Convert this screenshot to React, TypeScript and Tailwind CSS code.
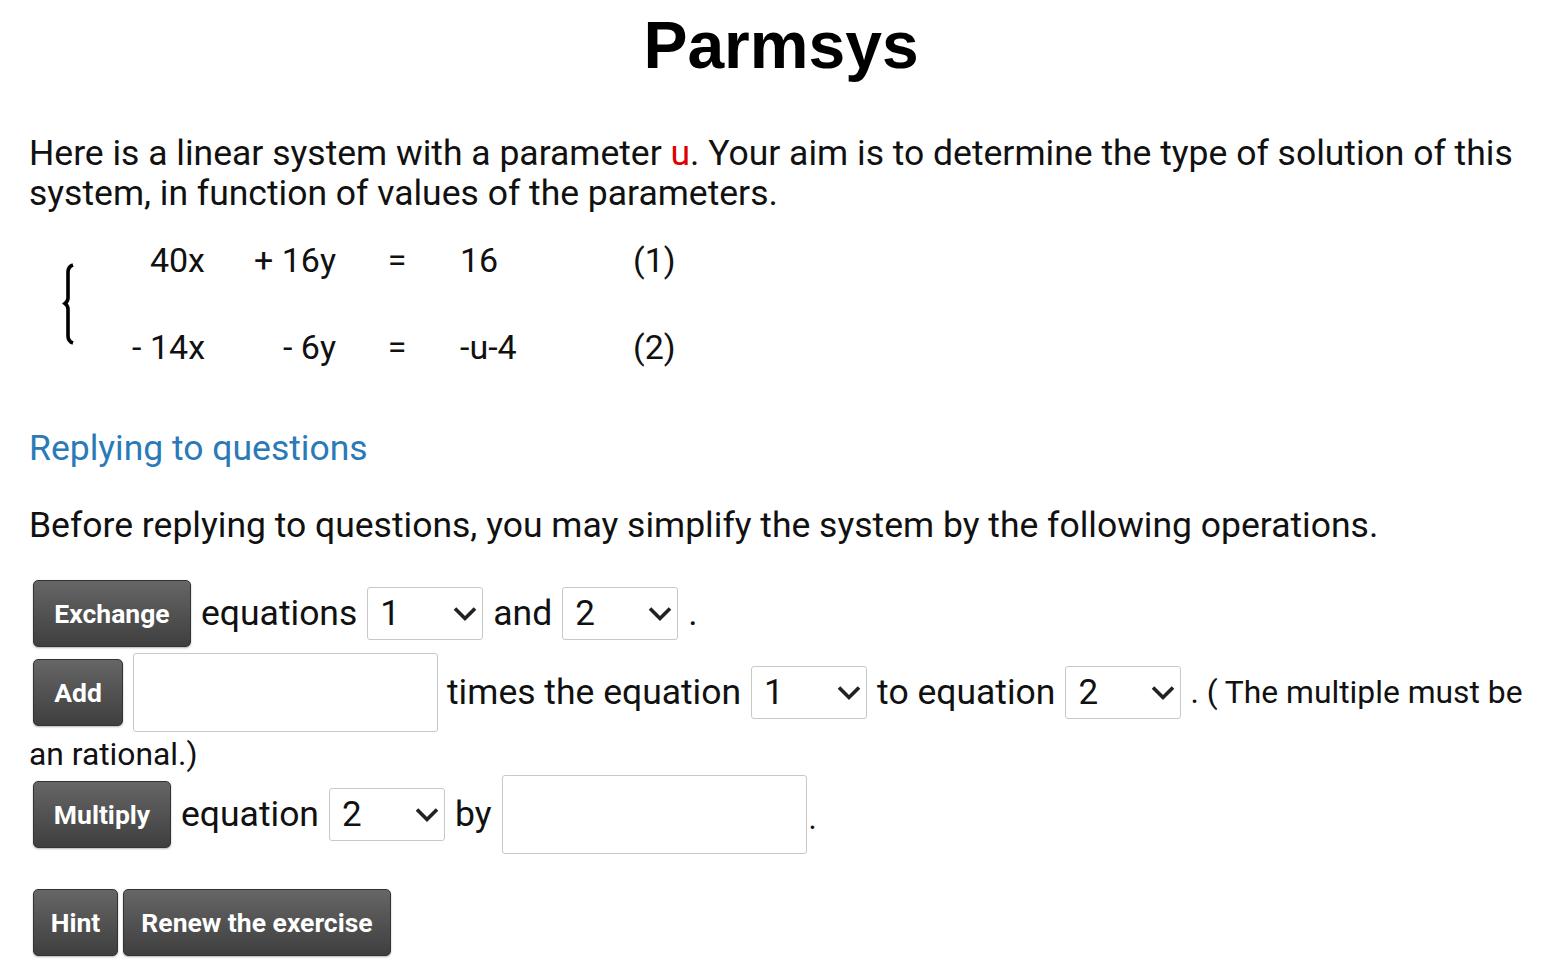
import React from "react";

const font = { fontFamily: "Roboto, 'Noto Sans', sans-serif" };

function Btn({ children, className = "" }: { children: React.ReactNode; className?: string }) {
  return (
    <button
      className={
        "h-[67px] rounded-[5px] border border-[#333] bg-gradient-to-b from-[#666] to-[#3f3f3f] text-[26.5px] font-bold text-white shadow-[0_1px_2px_rgba(0,0,0,0.3)] " +
        className
      }
      style={font}
    >
      {children}
    </button>
  );
}

function Sel({ value }: { value: string }) {
  return (
    <div className="flex h-[53px] w-[116px] items-center justify-between rounded-[3px] border border-[#c8c8c8] bg-white pl-[12px] pr-[5px]">
      <span className="text-[35px] leading-none text-[#111]">{value}</span>
      <svg width="24" height="16" viewBox="0 0 24 16">
        <path d="M2 2.5 L12 12.5 L22 2.5" fill="none" stroke="#222" strokeWidth="3.6" />
      </svg>
    </div>
  );
}

function Inp() {
  return <div className="h-[79px] w-[305px] rounded-[3px] border border-[#c8c8c8] bg-white" />;
}

export default function App() {
  return (
    <div className="min-h-[973px] w-[1562px] bg-white text-[#111]" style={font}>
      <h1
        className="pt-[9px] text-center text-[66px] font-bold leading-[72px] text-black"
        style={{ fontFamily: "'Liberation Sans', Arial, sans-serif" }}
      >
        Parmsys
      </h1>
      <div className="px-[29px]">
        <p className="mt-[52px] text-[35.5px] leading-[40px]">
          Here is a linear system with a parameter <span className="text-[#e00000]">u</span>. Your aim is to determine the type of solution of this system, in function of values of the parameters.
        </p>

        <div className="ml-[26px] mt-[4px] grid grid-cols-[25px_125px_131px_122px_175px_100px] grid-rows-[87px_87px] items-center text-[34px]">
          <div className="row-span-2 flex h-full items-center">
            <svg width="20" height="84" viewBox="0 0 20 84" className="ml-[2px]">
              <path
                d="M16 3 C13 4 11 6 11 10 L11 36 C11 39 10 40 8 41.5 C10 43 11 44 11 47 L11 74 C11 78 13 80 16 81"
                fill="none"
                stroke="#000"
                strokeWidth="3.6"
              />
            </svg>
          </div>
          <div className="text-right">40x</div>
          <div className="text-right">+ 16y</div>
          <div className="text-center">=</div>
          <div className="pl-[2px]">16</div>
          <div>(1)</div>
          <div className="text-right">- 14x</div>
          <div className="text-right">- 6y</div>
          <div className="text-center">=</div>
          <div className="pl-[2px]">-u-4</div>
          <div>(2)</div>
        </div>

        <h2 className="mt-[37px] text-[35.5px] leading-[40px] text-[#2a7ab8]">Replying to questions</h2>

        <p className="mt-[37px] text-[35.5px] leading-[40px]">
          Before replying to questions, you may simplify the system by the following operations.
        </p>

        <div className="mt-[35px] flex flex-col">
          <div className="flex items-center text-[35.5px]">
            <Btn className="ml-[4px] w-[158px]">Exchange</Btn>
            <span className="ml-[10px]">equations</span>
            <div className="ml-[10px]"><Sel value="1" /></div>
            <span className="ml-[10px]">and</span>
            <div className="ml-[10px]"><Sel value="2" /></div>
            <span className="ml-[10px]">.</span>
          </div>
          <div className="mt-[6px] flex items-center text-[35.5px]">
            <Btn className="ml-[4px] h-[66px] w-[90px]">Add</Btn>
            <div className="ml-[10px]"><Inp /></div>
            <span className="ml-[9px]">times the equation</span>
            <div className="ml-[10px]"><Sel value="1" /></div>
            <span className="ml-[10px]">to equation</span>
            <div className="ml-[10px]"><Sel value="2" /></div>
            <span className="ml-[9px] text-[31.8px]">. ( The multiple must be</span>
          </div>
          <div className="mt-[2px] text-[31.8px] leading-[40px]">an rational.)</div>
          <div className="mt-[1px] flex items-center text-[35.5px]">
            <Btn className="ml-[4px] w-[138px]">Multiply</Btn>
            <span className="ml-[10px]">equation</span>
            <div className="ml-[10px]"><Sel value="2" /></div>
            <span className="ml-[10px]">by</span>
            <div className="ml-[10px]"><Inp /></div>
            <span className="ml-[2px] self-center pt-[10px] text-[31px]">.</span>
          </div>
          <div className="mt-[35px] flex items-center">
            <Btn className="ml-[4px] w-[85px]">Hint</Btn>
            <Btn className="ml-[5px] w-[268px]">Renew the exercise</Btn>
          </div>
        </div>
      </div>
    </div>
  );
}
